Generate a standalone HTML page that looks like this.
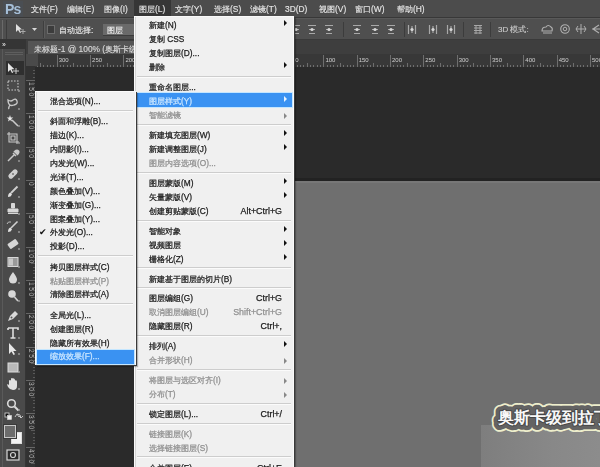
<!DOCTYPE html>
<html><head><meta charset="utf-8">
<style>
*{margin:0;padding:0;box-sizing:border-box}
html,body{width:600px;height:467px;overflow:hidden;background:#2a2a2a;font-family:"Liberation Sans",sans-serif;position:relative}
.abs{position:absolute}
#menubar{left:0;top:0;width:600px;height:17px;background:#4c4c4c}
.mb{position:absolute;top:3px;font-size:8.4px;line-height:12px;color:#e4e4e4;white-space:nowrap;-webkit-text-stroke-width:0.15px}
#opts{left:0;top:17px;width:600px;height:23px;background:#4f4f4f;border-top:1px solid #383838;border-bottom:1px solid #3a3a3a}
#tabbar{left:26px;top:40px;width:574px;height:14px;background:#3e3e3e}
#tab{left:28px;top:41px;width:110px;height:13px;background:#555555}
#tool{left:0;top:39px;width:26px;height:428px;background:#4a4a4a;border-right:1px solid #353535}
#vruler{left:26px;top:54px;width:9px;height:413px;background:#323232}
#hruler{left:26px;top:54px;width:574px;height:13px;background:#383838}
#canvas2{left:256px;top:181px;width:344px;height:286px;background:#6f6f6f}
.menu{position:absolute;background:#f0f0f0;border:1px solid #fafafa;box-shadow:1px 1px 0 #3a3a3a,2px 2px 1px rgba(0,0,0,0.25),inset 1px 0 0 #d4d4d4}
.it{position:absolute;font-size:8.3px;line-height:12px;color:#1c1c1c;-webkit-text-stroke-width:0.25px;white-space:nowrap}
.dis{color:#909090}
.hlt{color:#c8e5ff}
.sep{position:absolute;height:2px;border-top:1px solid #cdcdcd;border-bottom:1px solid #fbfbfb}
.arr{position:absolute;width:0;height:0;border-left:3px solid #111;border-top:3px solid transparent;border-bottom:3px solid transparent}
.arr.dis{border-left-color:#888}
.arr.hla{border-left-color:#e8f4ff}
.hl{position:absolute;background:#3a92f2;border:1px solid #c4e6ff}
.chk{position:absolute;font-size:9px;line-height:12px;color:#111}
.rl{position:absolute;font-size:6px;line-height:7px;color:#cfcfcf;white-space:nowrap}
.tk{position:absolute;background:#6e6e6e}
.ti{position:absolute}
#wrap{position:absolute;left:0;top:0;width:600px;height:467px;overflow:hidden;filter:blur(0.35px)}
</style></head><body><div id="wrap">
<div id="canvas2" class="abs"></div>
<div class="abs" style="left:35px;top:178px;width:565px;height:3px;background:#222"></div>
<div class="abs" style="left:256px;top:181px;width:344px;height:2px;background:#777"></div>
<div class="abs" style="left:481px;top:425px;width:119px;height:42px;background:linear-gradient(90deg,#7e7e7e,#888 60%,#8c8c8c)"></div>
<svg class="abs" style="left:470px;top:390px" width="130" height="45" viewBox="0 0 130 45"><g font-family="Liberation Sans, sans-serif" font-size="16.3" stroke-linejoin="round">
<text x="28" y="33" fill="#eeeecc" stroke="#eeeecc" stroke-width="13.5">奥斯卡级到拉丁</text>
<text x="28" y="33" fill="#636363" stroke="#636363" stroke-width="10">奥斯卡级到拉丁</text>
<text x="28" y="33" fill="#f8f8f8" stroke="#454545" stroke-width="2" paint-order="stroke" font-weight="bold">奥斯卡级到拉丁</text>
</g></svg>

<div id="menubar" class="abs">
  <div class="abs" style="left:3px;top:1px;width:20px;height:16px;background:#48505a;opacity:.5"></div><span class="mb" style="left:5px;top:1px;font-size:14px;line-height:17px;font-weight:bold;letter-spacing:-0.8px;color:#a6bfd8;-webkit-text-stroke-width:0">Ps</span>
  <div class="abs" style="left:134px;top:0;width:37px;height:17px;background:#363636"></div>
  <span class="mb" style="left:31px">文件(F)</span>
  <span class="mb" style="left:67px">编辑(E)</span>
  <span class="mb" style="left:104px">图像(I)</span>
  <span class="mb" style="left:139px">图层(L)</span>
  <span class="mb" style="left:175px">文字(Y)</span>
  <span class="mb" style="left:214px">选择(S)</span>
  <span class="mb" style="left:250px">滤镜(T)</span>
  <span class="mb" style="left:285px">3D(D)</span>
  <span class="mb" style="left:319px">视图(V)</span>
  <span class="mb" style="left:355px">窗口(W)</span>
  <span class="mb" style="left:397px">帮助(H)</span>
</div>
<div id="opts" class="abs"></div>
<div class="abs" style="left:0;top:18px;width:600px;height:1px;background:#595959"></div>
<div class="abs" style="left:2px;top:20px;width:1px;height:19px;background:#6a6a6a"></div>
<div class="abs" style="left:6px;top:20px;width:1px;height:19px;background:#3c3c3c"></div>
<svg class="abs" style="left:14px;top:23px" width="14" height="12" viewBox="0 0 14 12"><path d="M2 1 L2 9 L4 7 L6 10 L7 9.5 L5.5 6.5 L8 6.5 Z" fill="#e0e0e0"/><path d="M9 6 V11 M6.5 8.5 H11.5" stroke="#a8a8a8" stroke-width="1"/></svg>
<svg class="abs" style="left:32px;top:28px" width="5" height="4"><path d="M0 0 H5 L2.5 3 Z" fill="#d8d8d8"/></svg>
<div class="abs" style="left:43px;top:21px;width:1px;height:17px;background:#3e3e3e"></div>
<div class="abs" style="left:44px;top:21px;width:1px;height:17px;background:#5c5c5c"></div>
<div class="abs" style="left:47px;top:25px;width:8px;height:9px;background:#3c3c3c;border:1px solid #6c6c6c"></div>
<div class="abs mb" style="left:59px;top:24px;color:#e8e8e8">自动选择:</div>
<div class="abs" style="left:103px;top:24px;width:34px;height:12px;background:#6a6a6a;border-bottom:1px solid #3c3c3c"></div>
<div class="abs mb" style="left:107px;top:24px;color:#f0f0f0">图层</div>
<svg class="abs" style="left:291px;top:24px" width="10" height="11"><path d="M1 1.5 H9 M2 5.5 H8 M2 9.5 H8" stroke="#a8a8a8" stroke-width="1.2"/><circle cx="5" cy="5.5" r="1.6" fill="#d8d8d8"/></svg>
<svg class="abs" style="left:307px;top:24px" width="10" height="11"><path d="M1 1.5 H9 M2 5.5 H8 M2 9.5 H8" stroke="#a8a8a8" stroke-width="1.2"/><circle cx="5" cy="5.5" r="1.6" fill="#d8d8d8"/></svg>
<svg class="abs" style="left:324px;top:24px" width="10" height="11"><path d="M1 1.5 H9 M2 5.5 H8 M2 9.5 H8" stroke="#a8a8a8" stroke-width="1.2"/><circle cx="5" cy="5.5" r="1.6" fill="#d8d8d8"/></svg>
<div class="abs" style="left:343px;top:22px;width:1px;height:15px;background:#3c3c3c"></div>
<svg class="abs" style="left:352px;top:24px" width="10" height="11"><path d="M1 1.5 H9 M2 5.5 H8 M2 9.5 H8" stroke="#a8a8a8" stroke-width="1.2"/><circle cx="5" cy="5.5" r="1.6" fill="#d8d8d8"/></svg>
<svg class="abs" style="left:370px;top:24px" width="10" height="11"><path d="M1 1.5 H9 M2 5.5 H8 M2 9.5 H8" stroke="#a8a8a8" stroke-width="1.2"/><circle cx="5" cy="5.5" r="1.6" fill="#d8d8d8"/></svg>
<svg class="abs" style="left:386px;top:24px" width="10" height="11"><path d="M1 1.5 H9 M2 5.5 H8 M2 9.5 H8" stroke="#a8a8a8" stroke-width="1.2"/><circle cx="5" cy="5.5" r="1.6" fill="#d8d8d8"/></svg>
<div class="abs" style="left:404px;top:22px;width:1px;height:15px;background:#3c3c3c"></div>
<svg class="abs" style="left:407px;top:24px" width="10" height="11"><path d="M1.5 1 V10 M5 2 V9 M8.5 1 V10" stroke="#a8a8a8" stroke-width="1.2"/><circle cx="5" cy="5.5" r="1.6" fill="#d8d8d8"/></svg>
<svg class="abs" style="left:428px;top:24px" width="10" height="11"><path d="M1.5 1 V10 M5 2 V9 M8.5 1 V10" stroke="#a8a8a8" stroke-width="1.2"/><circle cx="5" cy="5.5" r="1.6" fill="#d8d8d8"/></svg>
<svg class="abs" style="left:446px;top:24px" width="10" height="11"><path d="M1.5 1 V10 M5 2 V9 M8.5 1 V10" stroke="#a8a8a8" stroke-width="1.2"/><circle cx="5" cy="5.5" r="1.6" fill="#d8d8d8"/></svg>
<div class="abs" style="left:463px;top:22px;width:1px;height:15px;background:#3c3c3c"></div>
<svg class="abs" style="left:473px;top:24px" width="10" height="11"><path d="M1 1.5 H9 M1 4 H9 M1 6.5 H9 M1 9 H9 M3 1 V10 M7 1 V10" stroke="#a8a8a8" stroke-width="1"/></svg>
<div class="abs" style="left:490px;top:22px;width:1px;height:15px;background:#3c3c3c"></div>
<div class="abs mb" style="left:498px;top:24px;color:#c8c8c8;font-size:8px">3D 模式:</div>
<svg class="abs" style="left:540px;top:23px" width="14" height="12"><path d="M2 8 Q2 4 6 4 Q8 1 11 4 Q13 5 12 8 Z M3 10 H12" stroke="#b0b0b0" stroke-width="1.1" fill="none"/></svg>
<svg class="abs" style="left:559px;top:23px" width="12" height="12"><circle cx="6" cy="6" r="4.3" stroke="#b0b0b0" stroke-width="1.1" fill="none"/><circle cx="6" cy="6" r="1.8" stroke="#b0b0b0" stroke-width="1" fill="none"/></svg>
<svg class="abs" style="left:575px;top:23px" width="12" height="12"><path d="M6 1 V11 M1 6 H11 M3 3 L1 6 L3 9 M9 3 L11 6 L9 9" stroke="#b0b0b0" stroke-width="1" fill="none"/></svg>
<svg class="abs" style="left:591px;top:23px" width="12" height="12"><path d="M2 6 L8 2 M2 6 L8 10 M1 6 H10" stroke="#b0b0b0" stroke-width="1.1" fill="none"/></svg>
<div id="tabbar" class="abs"></div>
<div id="tab" class="abs"></div>
<div class="abs mb" style="left:34px;top:43px;font-size:8.4px;line-height:12px;color:#d8d8d8">未标题-1 @ 100% (奥斯卡级到拉</div>
<div id="hruler" class="abs"></div>
<div class="tk" style="left:36.7px;top:65px;width:1px;height:2px"></div>
<div class="tk" style="left:40.1px;top:63px;width:1px;height:4px"></div>
<div class="tk" style="left:43.4px;top:65px;width:1px;height:2px"></div>
<div class="tk" style="left:46.7px;top:65px;width:1px;height:2px"></div>
<div class="tk" style="left:50.1px;top:65px;width:1px;height:2px"></div>
<div class="tk" style="left:53.4px;top:65px;width:1px;height:2px"></div>
<div class="tk" style="left:56.7px;top:55px;width:1px;height:12px"></div>
<div class="rl" style="left:58.7px;top:57px">300</div>
<div class="tk" style="left:60.1px;top:65px;width:1px;height:2px"></div>
<div class="tk" style="left:63.4px;top:65px;width:1px;height:2px"></div>
<div class="tk" style="left:66.7px;top:65px;width:1px;height:2px"></div>
<div class="tk" style="left:70.1px;top:65px;width:1px;height:2px"></div>
<div class="tk" style="left:73.4px;top:63px;width:1px;height:4px"></div>
<div class="tk" style="left:76.7px;top:65px;width:1px;height:2px"></div>
<div class="tk" style="left:80.1px;top:65px;width:1px;height:2px"></div>
<div class="tk" style="left:83.4px;top:65px;width:1px;height:2px"></div>
<div class="tk" style="left:86.7px;top:65px;width:1px;height:2px"></div>
<div class="tk" style="left:90.1px;top:55px;width:1px;height:12px"></div>
<div class="rl" style="left:92.1px;top:57px">250</div>
<div class="tk" style="left:93.4px;top:65px;width:1px;height:2px"></div>
<div class="tk" style="left:96.7px;top:65px;width:1px;height:2px"></div>
<div class="tk" style="left:100.0px;top:65px;width:1px;height:2px"></div>
<div class="tk" style="left:103.4px;top:65px;width:1px;height:2px"></div>
<div class="tk" style="left:106.7px;top:63px;width:1px;height:4px"></div>
<div class="tk" style="left:110.0px;top:65px;width:1px;height:2px"></div>
<div class="tk" style="left:113.4px;top:65px;width:1px;height:2px"></div>
<div class="tk" style="left:116.7px;top:65px;width:1px;height:2px"></div>
<div class="tk" style="left:120.0px;top:65px;width:1px;height:2px"></div>
<div class="tk" style="left:123.4px;top:55px;width:1px;height:12px"></div>
<div class="rl" style="left:125.4px;top:57px">200</div>
<div class="tk" style="left:126.7px;top:65px;width:1px;height:2px"></div>
<div class="tk" style="left:130.0px;top:65px;width:1px;height:2px"></div>
<div class="tk" style="left:133.4px;top:65px;width:1px;height:2px"></div>
<div class="tk" style="left:136.7px;top:65px;width:1px;height:2px"></div>
<div class="tk" style="left:140.0px;top:63px;width:1px;height:4px"></div>
<div class="tk" style="left:143.4px;top:65px;width:1px;height:2px"></div>
<div class="tk" style="left:146.7px;top:65px;width:1px;height:2px"></div>
<div class="tk" style="left:150.0px;top:65px;width:1px;height:2px"></div>
<div class="tk" style="left:153.4px;top:65px;width:1px;height:2px"></div>
<div class="tk" style="left:156.7px;top:55px;width:1px;height:12px"></div>
<div class="rl" style="left:158.7px;top:57px">150</div>
<div class="tk" style="left:160.0px;top:65px;width:1px;height:2px"></div>
<div class="tk" style="left:163.4px;top:65px;width:1px;height:2px"></div>
<div class="tk" style="left:166.7px;top:65px;width:1px;height:2px"></div>
<div class="tk" style="left:170.0px;top:65px;width:1px;height:2px"></div>
<div class="tk" style="left:173.4px;top:63px;width:1px;height:4px"></div>
<div class="tk" style="left:176.7px;top:65px;width:1px;height:2px"></div>
<div class="tk" style="left:180.0px;top:65px;width:1px;height:2px"></div>
<div class="tk" style="left:183.4px;top:65px;width:1px;height:2px"></div>
<div class="tk" style="left:186.7px;top:65px;width:1px;height:2px"></div>
<div class="tk" style="left:190.0px;top:55px;width:1px;height:12px"></div>
<div class="rl" style="left:192.0px;top:57px">100</div>
<div class="tk" style="left:193.4px;top:65px;width:1px;height:2px"></div>
<div class="tk" style="left:196.7px;top:65px;width:1px;height:2px"></div>
<div class="tk" style="left:200.0px;top:65px;width:1px;height:2px"></div>
<div class="tk" style="left:203.4px;top:65px;width:1px;height:2px"></div>
<div class="tk" style="left:206.7px;top:63px;width:1px;height:4px"></div>
<div class="tk" style="left:210.0px;top:65px;width:1px;height:2px"></div>
<div class="tk" style="left:213.4px;top:65px;width:1px;height:2px"></div>
<div class="tk" style="left:216.7px;top:65px;width:1px;height:2px"></div>
<div class="tk" style="left:220.0px;top:65px;width:1px;height:2px"></div>
<div class="tk" style="left:223.4px;top:55px;width:1px;height:12px"></div>
<div class="rl" style="left:225.4px;top:57px">50</div>
<div class="tk" style="left:226.7px;top:65px;width:1px;height:2px"></div>
<div class="tk" style="left:230.0px;top:65px;width:1px;height:2px"></div>
<div class="tk" style="left:233.4px;top:65px;width:1px;height:2px"></div>
<div class="tk" style="left:236.7px;top:65px;width:1px;height:2px"></div>
<div class="tk" style="left:240.0px;top:63px;width:1px;height:4px"></div>
<div class="tk" style="left:243.4px;top:65px;width:1px;height:2px"></div>
<div class="tk" style="left:246.7px;top:65px;width:1px;height:2px"></div>
<div class="tk" style="left:250.0px;top:65px;width:1px;height:2px"></div>
<div class="tk" style="left:253.4px;top:65px;width:1px;height:2px"></div>
<div class="tk" style="left:256.7px;top:55px;width:1px;height:12px"></div>
<div class="rl" style="left:258.7px;top:57px">0</div>
<div class="tk" style="left:260.0px;top:65px;width:1px;height:2px"></div>
<div class="tk" style="left:263.4px;top:65px;width:1px;height:2px"></div>
<div class="tk" style="left:266.7px;top:65px;width:1px;height:2px"></div>
<div class="tk" style="left:270.0px;top:65px;width:1px;height:2px"></div>
<div class="tk" style="left:273.4px;top:63px;width:1px;height:4px"></div>
<div class="tk" style="left:276.7px;top:65px;width:1px;height:2px"></div>
<div class="tk" style="left:280.0px;top:65px;width:1px;height:2px"></div>
<div class="tk" style="left:283.4px;top:65px;width:1px;height:2px"></div>
<div class="tk" style="left:286.7px;top:65px;width:1px;height:2px"></div>
<div class="tk" style="left:290.0px;top:55px;width:1px;height:12px"></div>
<div class="rl" style="left:292.0px;top:57px">50</div>
<div class="tk" style="left:293.4px;top:65px;width:1px;height:2px"></div>
<div class="tk" style="left:296.7px;top:65px;width:1px;height:2px"></div>
<div class="tk" style="left:300.0px;top:65px;width:1px;height:2px"></div>
<div class="tk" style="left:303.4px;top:65px;width:1px;height:2px"></div>
<div class="tk" style="left:306.7px;top:63px;width:1px;height:4px"></div>
<div class="tk" style="left:310.0px;top:65px;width:1px;height:2px"></div>
<div class="tk" style="left:313.4px;top:65px;width:1px;height:2px"></div>
<div class="tk" style="left:316.7px;top:65px;width:1px;height:2px"></div>
<div class="tk" style="left:320.0px;top:65px;width:1px;height:2px"></div>
<div class="tk" style="left:323.4px;top:55px;width:1px;height:12px"></div>
<div class="rl" style="left:325.4px;top:57px">100</div>
<div class="tk" style="left:326.7px;top:65px;width:1px;height:2px"></div>
<div class="tk" style="left:330.0px;top:65px;width:1px;height:2px"></div>
<div class="tk" style="left:333.4px;top:65px;width:1px;height:2px"></div>
<div class="tk" style="left:336.7px;top:65px;width:1px;height:2px"></div>
<div class="tk" style="left:340.0px;top:63px;width:1px;height:4px"></div>
<div class="tk" style="left:343.4px;top:65px;width:1px;height:2px"></div>
<div class="tk" style="left:346.7px;top:65px;width:1px;height:2px"></div>
<div class="tk" style="left:350.0px;top:65px;width:1px;height:2px"></div>
<div class="tk" style="left:353.4px;top:65px;width:1px;height:2px"></div>
<div class="tk" style="left:356.7px;top:55px;width:1px;height:12px"></div>
<div class="rl" style="left:358.7px;top:57px">150</div>
<div class="tk" style="left:360.0px;top:65px;width:1px;height:2px"></div>
<div class="tk" style="left:363.4px;top:65px;width:1px;height:2px"></div>
<div class="tk" style="left:366.7px;top:65px;width:1px;height:2px"></div>
<div class="tk" style="left:370.0px;top:65px;width:1px;height:2px"></div>
<div class="tk" style="left:373.4px;top:63px;width:1px;height:4px"></div>
<div class="tk" style="left:376.7px;top:65px;width:1px;height:2px"></div>
<div class="tk" style="left:380.0px;top:65px;width:1px;height:2px"></div>
<div class="tk" style="left:383.4px;top:65px;width:1px;height:2px"></div>
<div class="tk" style="left:386.7px;top:65px;width:1px;height:2px"></div>
<div class="tk" style="left:390.0px;top:55px;width:1px;height:12px"></div>
<div class="rl" style="left:392.0px;top:57px">200</div>
<div class="tk" style="left:393.4px;top:65px;width:1px;height:2px"></div>
<div class="tk" style="left:396.7px;top:65px;width:1px;height:2px"></div>
<div class="tk" style="left:400.0px;top:65px;width:1px;height:2px"></div>
<div class="tk" style="left:403.4px;top:65px;width:1px;height:2px"></div>
<div class="tk" style="left:406.7px;top:63px;width:1px;height:4px"></div>
<div class="tk" style="left:410.0px;top:65px;width:1px;height:2px"></div>
<div class="tk" style="left:413.4px;top:65px;width:1px;height:2px"></div>
<div class="tk" style="left:416.7px;top:65px;width:1px;height:2px"></div>
<div class="tk" style="left:420.0px;top:65px;width:1px;height:2px"></div>
<div class="tk" style="left:423.3px;top:55px;width:1px;height:12px"></div>
<div class="rl" style="left:425.3px;top:57px">250</div>
<div class="tk" style="left:426.7px;top:65px;width:1px;height:2px"></div>
<div class="tk" style="left:430.0px;top:65px;width:1px;height:2px"></div>
<div class="tk" style="left:433.3px;top:65px;width:1px;height:2px"></div>
<div class="tk" style="left:436.7px;top:65px;width:1px;height:2px"></div>
<div class="tk" style="left:440.0px;top:63px;width:1px;height:4px"></div>
<div class="tk" style="left:443.3px;top:65px;width:1px;height:2px"></div>
<div class="tk" style="left:446.7px;top:65px;width:1px;height:2px"></div>
<div class="tk" style="left:450.0px;top:65px;width:1px;height:2px"></div>
<div class="tk" style="left:453.3px;top:65px;width:1px;height:2px"></div>
<div class="tk" style="left:456.7px;top:55px;width:1px;height:12px"></div>
<div class="rl" style="left:458.7px;top:57px">300</div>
<div class="tk" style="left:460.0px;top:65px;width:1px;height:2px"></div>
<div class="tk" style="left:463.3px;top:65px;width:1px;height:2px"></div>
<div class="tk" style="left:466.7px;top:65px;width:1px;height:2px"></div>
<div class="tk" style="left:470.0px;top:65px;width:1px;height:2px"></div>
<div class="tk" style="left:473.3px;top:63px;width:1px;height:4px"></div>
<div class="tk" style="left:476.7px;top:65px;width:1px;height:2px"></div>
<div class="tk" style="left:480.0px;top:65px;width:1px;height:2px"></div>
<div class="tk" style="left:483.3px;top:65px;width:1px;height:2px"></div>
<div class="tk" style="left:486.7px;top:65px;width:1px;height:2px"></div>
<div class="tk" style="left:490.0px;top:55px;width:1px;height:12px"></div>
<div class="rl" style="left:492.0px;top:57px">350</div>
<div class="tk" style="left:493.3px;top:65px;width:1px;height:2px"></div>
<div class="tk" style="left:496.7px;top:65px;width:1px;height:2px"></div>
<div class="tk" style="left:500.0px;top:65px;width:1px;height:2px"></div>
<div class="tk" style="left:503.3px;top:65px;width:1px;height:2px"></div>
<div class="tk" style="left:506.7px;top:63px;width:1px;height:4px"></div>
<div class="tk" style="left:510.0px;top:65px;width:1px;height:2px"></div>
<div class="tk" style="left:513.3px;top:65px;width:1px;height:2px"></div>
<div class="tk" style="left:516.7px;top:65px;width:1px;height:2px"></div>
<div class="tk" style="left:520.0px;top:65px;width:1px;height:2px"></div>
<div class="tk" style="left:523.3px;top:55px;width:1px;height:12px"></div>
<div class="rl" style="left:525.3px;top:57px">400</div>
<div class="tk" style="left:526.7px;top:65px;width:1px;height:2px"></div>
<div class="tk" style="left:530.0px;top:65px;width:1px;height:2px"></div>
<div class="tk" style="left:533.3px;top:65px;width:1px;height:2px"></div>
<div class="tk" style="left:536.7px;top:65px;width:1px;height:2px"></div>
<div class="tk" style="left:540.0px;top:63px;width:1px;height:4px"></div>
<div class="tk" style="left:543.3px;top:65px;width:1px;height:2px"></div>
<div class="tk" style="left:546.7px;top:65px;width:1px;height:2px"></div>
<div class="tk" style="left:550.0px;top:65px;width:1px;height:2px"></div>
<div class="tk" style="left:553.3px;top:65px;width:1px;height:2px"></div>
<div class="tk" style="left:556.7px;top:55px;width:1px;height:12px"></div>
<div class="rl" style="left:558.7px;top:57px">450</div>
<div class="tk" style="left:560.0px;top:65px;width:1px;height:2px"></div>
<div class="tk" style="left:563.3px;top:65px;width:1px;height:2px"></div>
<div class="tk" style="left:566.7px;top:65px;width:1px;height:2px"></div>
<div class="tk" style="left:570.0px;top:65px;width:1px;height:2px"></div>
<div class="tk" style="left:573.3px;top:63px;width:1px;height:4px"></div>
<div class="tk" style="left:576.7px;top:65px;width:1px;height:2px"></div>
<div class="tk" style="left:580.0px;top:65px;width:1px;height:2px"></div>
<div class="tk" style="left:583.3px;top:65px;width:1px;height:2px"></div>
<div class="tk" style="left:586.7px;top:65px;width:1px;height:2px"></div>
<div class="tk" style="left:590.0px;top:55px;width:1px;height:12px"></div>
<div class="rl" style="left:592.0px;top:57px">500</div>
<div class="tk" style="left:593.3px;top:65px;width:1px;height:2px"></div>
<div class="tk" style="left:596.7px;top:65px;width:1px;height:2px"></div>
<div class="tk" style="left:600.0px;top:65px;width:1px;height:2px"></div>
<div id="vruler" class="abs"></div>
<div class="tk" style="left:33px;top:70.0px;width:2px;height:1px;background:#5a5a5a"></div>
<div class="tk" style="left:33px;top:73.3px;width:2px;height:1px;background:#5a5a5a"></div>
<div class="tk" style="left:33px;top:76.7px;width:2px;height:1px;background:#5a5a5a"></div>
<div class="tk" style="left:26px;top:80.0px;width:9px;height:1px;background:#666"></div>
<div class="rl" style="left:28px;top:82.0px;writing-mode:vertical-rl;font-size:6.5px;line-height:7px;letter-spacing:1.6px;color:#bdbdbd">150</div>
<div class="tk" style="left:33px;top:83.3px;width:2px;height:1px;background:#5a5a5a"></div>
<div class="tk" style="left:33px;top:86.7px;width:2px;height:1px;background:#5a5a5a"></div>
<div class="tk" style="left:33px;top:90.0px;width:2px;height:1px;background:#5a5a5a"></div>
<div class="tk" style="left:33px;top:93.3px;width:2px;height:1px;background:#5a5a5a"></div>
<div class="tk" style="left:31px;top:96.7px;width:4px;height:1px;background:#5a5a5a"></div>
<div class="tk" style="left:33px;top:100.0px;width:2px;height:1px;background:#5a5a5a"></div>
<div class="tk" style="left:33px;top:103.3px;width:2px;height:1px;background:#5a5a5a"></div>
<div class="tk" style="left:33px;top:106.7px;width:2px;height:1px;background:#5a5a5a"></div>
<div class="tk" style="left:33px;top:110.0px;width:2px;height:1px;background:#5a5a5a"></div>
<div class="tk" style="left:26px;top:113.3px;width:9px;height:1px;background:#666"></div>
<div class="rl" style="left:28px;top:115.3px;writing-mode:vertical-rl;font-size:6.5px;line-height:7px;letter-spacing:1.6px;color:#bdbdbd">100</div>
<div class="tk" style="left:33px;top:116.7px;width:2px;height:1px;background:#5a5a5a"></div>
<div class="tk" style="left:33px;top:120.0px;width:2px;height:1px;background:#5a5a5a"></div>
<div class="tk" style="left:33px;top:123.3px;width:2px;height:1px;background:#5a5a5a"></div>
<div class="tk" style="left:33px;top:126.7px;width:2px;height:1px;background:#5a5a5a"></div>
<div class="tk" style="left:31px;top:130.0px;width:4px;height:1px;background:#5a5a5a"></div>
<div class="tk" style="left:33px;top:133.3px;width:2px;height:1px;background:#5a5a5a"></div>
<div class="tk" style="left:33px;top:136.7px;width:2px;height:1px;background:#5a5a5a"></div>
<div class="tk" style="left:33px;top:140.0px;width:2px;height:1px;background:#5a5a5a"></div>
<div class="tk" style="left:33px;top:143.3px;width:2px;height:1px;background:#5a5a5a"></div>
<div class="tk" style="left:26px;top:146.7px;width:9px;height:1px;background:#666"></div>
<div class="rl" style="left:28px;top:148.7px;writing-mode:vertical-rl;font-size:6.5px;line-height:7px;letter-spacing:1.6px;color:#bdbdbd">50</div>
<div class="tk" style="left:33px;top:150.0px;width:2px;height:1px;background:#5a5a5a"></div>
<div class="tk" style="left:33px;top:153.3px;width:2px;height:1px;background:#5a5a5a"></div>
<div class="tk" style="left:33px;top:156.7px;width:2px;height:1px;background:#5a5a5a"></div>
<div class="tk" style="left:33px;top:160.0px;width:2px;height:1px;background:#5a5a5a"></div>
<div class="tk" style="left:31px;top:163.3px;width:4px;height:1px;background:#5a5a5a"></div>
<div class="tk" style="left:33px;top:166.7px;width:2px;height:1px;background:#5a5a5a"></div>
<div class="tk" style="left:33px;top:170.0px;width:2px;height:1px;background:#5a5a5a"></div>
<div class="tk" style="left:33px;top:173.3px;width:2px;height:1px;background:#5a5a5a"></div>
<div class="tk" style="left:33px;top:176.7px;width:2px;height:1px;background:#5a5a5a"></div>
<div class="tk" style="left:26px;top:180.0px;width:9px;height:1px;background:#666"></div>
<div class="rl" style="left:28px;top:182.0px;writing-mode:vertical-rl;font-size:6.5px;line-height:7px;letter-spacing:1.6px;color:#bdbdbd">0</div>
<div class="tk" style="left:33px;top:183.3px;width:2px;height:1px;background:#5a5a5a"></div>
<div class="tk" style="left:33px;top:186.7px;width:2px;height:1px;background:#5a5a5a"></div>
<div class="tk" style="left:33px;top:190.0px;width:2px;height:1px;background:#5a5a5a"></div>
<div class="tk" style="left:33px;top:193.3px;width:2px;height:1px;background:#5a5a5a"></div>
<div class="tk" style="left:31px;top:196.7px;width:4px;height:1px;background:#5a5a5a"></div>
<div class="tk" style="left:33px;top:200.0px;width:2px;height:1px;background:#5a5a5a"></div>
<div class="tk" style="left:33px;top:203.3px;width:2px;height:1px;background:#5a5a5a"></div>
<div class="tk" style="left:33px;top:206.7px;width:2px;height:1px;background:#5a5a5a"></div>
<div class="tk" style="left:33px;top:210.0px;width:2px;height:1px;background:#5a5a5a"></div>
<div class="tk" style="left:26px;top:213.3px;width:9px;height:1px;background:#666"></div>
<div class="rl" style="left:28px;top:215.3px;writing-mode:vertical-rl;font-size:6.5px;line-height:7px;letter-spacing:1.6px;color:#bdbdbd">50</div>
<div class="tk" style="left:33px;top:216.7px;width:2px;height:1px;background:#5a5a5a"></div>
<div class="tk" style="left:33px;top:220.0px;width:2px;height:1px;background:#5a5a5a"></div>
<div class="tk" style="left:33px;top:223.3px;width:2px;height:1px;background:#5a5a5a"></div>
<div class="tk" style="left:33px;top:226.7px;width:2px;height:1px;background:#5a5a5a"></div>
<div class="tk" style="left:31px;top:230.0px;width:4px;height:1px;background:#5a5a5a"></div>
<div class="tk" style="left:33px;top:233.3px;width:2px;height:1px;background:#5a5a5a"></div>
<div class="tk" style="left:33px;top:236.7px;width:2px;height:1px;background:#5a5a5a"></div>
<div class="tk" style="left:33px;top:240.0px;width:2px;height:1px;background:#5a5a5a"></div>
<div class="tk" style="left:33px;top:243.3px;width:2px;height:1px;background:#5a5a5a"></div>
<div class="tk" style="left:26px;top:246.7px;width:9px;height:1px;background:#666"></div>
<div class="rl" style="left:28px;top:248.7px;writing-mode:vertical-rl;font-size:6.5px;line-height:7px;letter-spacing:1.6px;color:#bdbdbd">100</div>
<div class="tk" style="left:33px;top:250.0px;width:2px;height:1px;background:#5a5a5a"></div>
<div class="tk" style="left:33px;top:253.3px;width:2px;height:1px;background:#5a5a5a"></div>
<div class="tk" style="left:33px;top:256.7px;width:2px;height:1px;background:#5a5a5a"></div>
<div class="tk" style="left:33px;top:260.0px;width:2px;height:1px;background:#5a5a5a"></div>
<div class="tk" style="left:31px;top:263.3px;width:4px;height:1px;background:#5a5a5a"></div>
<div class="tk" style="left:33px;top:266.7px;width:2px;height:1px;background:#5a5a5a"></div>
<div class="tk" style="left:33px;top:270.0px;width:2px;height:1px;background:#5a5a5a"></div>
<div class="tk" style="left:33px;top:273.3px;width:2px;height:1px;background:#5a5a5a"></div>
<div class="tk" style="left:33px;top:276.7px;width:2px;height:1px;background:#5a5a5a"></div>
<div class="tk" style="left:26px;top:280.0px;width:9px;height:1px;background:#666"></div>
<div class="rl" style="left:28px;top:282.0px;writing-mode:vertical-rl;font-size:6.5px;line-height:7px;letter-spacing:1.6px;color:#bdbdbd">150</div>
<div class="tk" style="left:33px;top:283.3px;width:2px;height:1px;background:#5a5a5a"></div>
<div class="tk" style="left:33px;top:286.7px;width:2px;height:1px;background:#5a5a5a"></div>
<div class="tk" style="left:33px;top:290.0px;width:2px;height:1px;background:#5a5a5a"></div>
<div class="tk" style="left:33px;top:293.3px;width:2px;height:1px;background:#5a5a5a"></div>
<div class="tk" style="left:31px;top:296.7px;width:4px;height:1px;background:#5a5a5a"></div>
<div class="tk" style="left:33px;top:300.0px;width:2px;height:1px;background:#5a5a5a"></div>
<div class="tk" style="left:33px;top:303.3px;width:2px;height:1px;background:#5a5a5a"></div>
<div class="tk" style="left:33px;top:306.7px;width:2px;height:1px;background:#5a5a5a"></div>
<div class="tk" style="left:33px;top:310.0px;width:2px;height:1px;background:#5a5a5a"></div>
<div class="tk" style="left:26px;top:313.3px;width:9px;height:1px;background:#666"></div>
<div class="rl" style="left:28px;top:315.3px;writing-mode:vertical-rl;font-size:6.5px;line-height:7px;letter-spacing:1.6px;color:#bdbdbd">200</div>
<div class="tk" style="left:33px;top:316.7px;width:2px;height:1px;background:#5a5a5a"></div>
<div class="tk" style="left:33px;top:320.0px;width:2px;height:1px;background:#5a5a5a"></div>
<div class="tk" style="left:33px;top:323.3px;width:2px;height:1px;background:#5a5a5a"></div>
<div class="tk" style="left:33px;top:326.7px;width:2px;height:1px;background:#5a5a5a"></div>
<div class="tk" style="left:31px;top:330.0px;width:4px;height:1px;background:#5a5a5a"></div>
<div class="tk" style="left:33px;top:333.3px;width:2px;height:1px;background:#5a5a5a"></div>
<div class="tk" style="left:33px;top:336.7px;width:2px;height:1px;background:#5a5a5a"></div>
<div class="tk" style="left:33px;top:340.0px;width:2px;height:1px;background:#5a5a5a"></div>
<div class="tk" style="left:33px;top:343.3px;width:2px;height:1px;background:#5a5a5a"></div>
<div class="tk" style="left:26px;top:346.6px;width:9px;height:1px;background:#666"></div>
<div class="rl" style="left:28px;top:348.6px;writing-mode:vertical-rl;font-size:6.5px;line-height:7px;letter-spacing:1.6px;color:#bdbdbd">250</div>
<div class="tk" style="left:33px;top:350.0px;width:2px;height:1px;background:#5a5a5a"></div>
<div class="tk" style="left:33px;top:353.3px;width:2px;height:1px;background:#5a5a5a"></div>
<div class="tk" style="left:33px;top:356.6px;width:2px;height:1px;background:#5a5a5a"></div>
<div class="tk" style="left:33px;top:360.0px;width:2px;height:1px;background:#5a5a5a"></div>
<div class="tk" style="left:31px;top:363.3px;width:4px;height:1px;background:#5a5a5a"></div>
<div class="tk" style="left:33px;top:366.6px;width:2px;height:1px;background:#5a5a5a"></div>
<div class="tk" style="left:33px;top:370.0px;width:2px;height:1px;background:#5a5a5a"></div>
<div class="tk" style="left:33px;top:373.3px;width:2px;height:1px;background:#5a5a5a"></div>
<div class="tk" style="left:33px;top:376.6px;width:2px;height:1px;background:#5a5a5a"></div>
<div class="tk" style="left:26px;top:380.0px;width:9px;height:1px;background:#666"></div>
<div class="rl" style="left:28px;top:382.0px;writing-mode:vertical-rl;font-size:6.5px;line-height:7px;letter-spacing:1.6px;color:#bdbdbd">300</div>
<div class="tk" style="left:33px;top:383.3px;width:2px;height:1px;background:#5a5a5a"></div>
<div class="tk" style="left:33px;top:386.6px;width:2px;height:1px;background:#5a5a5a"></div>
<div class="tk" style="left:33px;top:390.0px;width:2px;height:1px;background:#5a5a5a"></div>
<div class="tk" style="left:33px;top:393.3px;width:2px;height:1px;background:#5a5a5a"></div>
<div class="tk" style="left:31px;top:396.6px;width:4px;height:1px;background:#5a5a5a"></div>
<div class="tk" style="left:33px;top:400.0px;width:2px;height:1px;background:#5a5a5a"></div>
<div class="tk" style="left:33px;top:403.3px;width:2px;height:1px;background:#5a5a5a"></div>
<div class="tk" style="left:33px;top:406.6px;width:2px;height:1px;background:#5a5a5a"></div>
<div class="tk" style="left:33px;top:410.0px;width:2px;height:1px;background:#5a5a5a"></div>
<div class="tk" style="left:26px;top:413.3px;width:9px;height:1px;background:#666"></div>
<div class="rl" style="left:28px;top:415.3px;writing-mode:vertical-rl;font-size:6.5px;line-height:7px;letter-spacing:1.6px;color:#bdbdbd">350</div>
<div class="tk" style="left:33px;top:416.6px;width:2px;height:1px;background:#5a5a5a"></div>
<div class="tk" style="left:33px;top:420.0px;width:2px;height:1px;background:#5a5a5a"></div>
<div class="tk" style="left:33px;top:423.3px;width:2px;height:1px;background:#5a5a5a"></div>
<div class="tk" style="left:33px;top:426.6px;width:2px;height:1px;background:#5a5a5a"></div>
<div class="tk" style="left:31px;top:430.0px;width:4px;height:1px;background:#5a5a5a"></div>
<div class="tk" style="left:33px;top:433.3px;width:2px;height:1px;background:#5a5a5a"></div>
<div class="tk" style="left:33px;top:436.6px;width:2px;height:1px;background:#5a5a5a"></div>
<div class="tk" style="left:33px;top:440.0px;width:2px;height:1px;background:#5a5a5a"></div>
<div class="tk" style="left:33px;top:443.3px;width:2px;height:1px;background:#5a5a5a"></div>
<div class="tk" style="left:26px;top:446.6px;width:9px;height:1px;background:#666"></div>
<div class="rl" style="left:28px;top:448.6px;writing-mode:vertical-rl;font-size:6.5px;line-height:7px;letter-spacing:1.6px;color:#bdbdbd">400</div>
<div class="tk" style="left:33px;top:450.0px;width:2px;height:1px;background:#5a5a5a"></div>
<div class="tk" style="left:33px;top:453.3px;width:2px;height:1px;background:#5a5a5a"></div>
<div class="tk" style="left:33px;top:456.6px;width:2px;height:1px;background:#5a5a5a"></div>
<div class="tk" style="left:33px;top:460.0px;width:2px;height:1px;background:#5a5a5a"></div>
<div class="tk" style="left:31px;top:463.3px;width:4px;height:1px;background:#5a5a5a"></div>
<div class="tk" style="left:33px;top:466.6px;width:2px;height:1px;background:#5a5a5a"></div>
<div class="abs" style="left:26px;top:54px;width:12px;height:12px;background:#4a4a4a"></div>
<div id="tool" class="abs"></div>
<div class="abs" style="left:0;top:39px;width:26px;height:10px;background:#353535"></div>
<div class="abs" style="left:2px;top:41px;font-size:7px;line-height:7px;color:#cfcfcf;font-weight:bold">»</div>
<div class="abs" style="left:2px;top:49px;width:1px;height:418px;background:#5a5a5a"></div>
<div class="abs" style="left:5px;top:52px;width:18px;height:1px;background:#5e5e5e"></div>
<div class="abs" style="left:5px;top:54px;width:18px;height:1px;background:#5e5e5e"></div>
<div class="abs" style="left:6px;top:61px;width:18px;height:14px;background:#2f2f2f"></div>
<svg class="abs" style="left:5px;top:60px" width="16" height="16" viewBox="0 0 16 16"><path d="M3 3 L3 12 L5.3 9.8 L7 13 L8.2 12.4 L6.6 9.3 L9.5 9.3 Z" fill="#e6e6e6"/><path d="M11 8 V14 M8 11 H14" stroke="#c9c9c9" stroke-width="1"/></svg>
<svg class="abs" style="left:5px;top:78px" width="16" height="16" viewBox="0 0 16 16"><rect x="3" y="3" width="10" height="9" fill="none" stroke="#c9c9c9" stroke-width="1.1" stroke-dasharray="1.6 1.4"/><circle cx="14" cy="13" r="0.9" fill="#a0a0a0"/></svg>
<svg class="abs" style="left:5px;top:96px" width="16" height="16" viewBox="0 0 16 16"><path d="M3 4 Q6 6 8 4 Q11 2 12 5 Q13 8 9 9 Q6 10 5 9 Q3 8 3 4 Z M5 9 Q3 12 4 13" fill="none" stroke="#c9c9c9" stroke-width="1.3"/><circle cx="14" cy="13" r="0.9" fill="#a0a0a0"/></svg>
<svg class="abs" style="left:5px;top:113px" width="16" height="16" viewBox="0 0 16 16"><path d="M7 7 L13 13" stroke="#c9c9c9" stroke-width="1.6"/><path d="M5 2 L5.8 4.5 L8.3 4.5 L6.3 6 L7 8.5 L5 7 L3 8.5 L3.7 6 L1.7 4.5 L4.2 4.5 Z" fill="#e8e8e8"/><circle cx="14" cy="13" r="0.9" fill="#a0a0a0"/></svg>
<svg class="abs" style="left:5px;top:130px" width="16" height="16" viewBox="0 0 16 16"><path d="M4 2 V12 H14 M2 4 H12 V14 M6 6 H10 V10 H6 Z" fill="none" stroke="#c9c9c9" stroke-width="1.1"/><circle cx="14" cy="13" r="0.9" fill="#a0a0a0"/></svg>
<svg class="abs" style="left:5px;top:148px" width="16" height="16" viewBox="0 0 16 16"><path d="M3 13 L9 7 M8 5 L11 8 M9.5 3.5 Q12 1.5 13.5 3 Q14.5 4.5 12.5 6.5 Z" fill="#c9c9c9" stroke="#c9c9c9" stroke-width="1.5"/><circle cx="14" cy="13" r="0.9" fill="#a0a0a0"/></svg>
<svg class="abs" style="left:5px;top:166px" width="16" height="16" viewBox="0 0 16 16"><rect x="2.5" y="5.5" width="11" height="5" rx="2.5" transform="rotate(-45 8 8)" fill="#d0d0d0"/><circle cx="8" cy="8" r="1" fill="#777"/><circle cx="14" cy="13" r="0.9" fill="#a0a0a0"/></svg>
<svg class="abs" style="left:5px;top:184px" width="16" height="16" viewBox="0 0 16 16"><path d="M12.5 2.5 L6 9" stroke="#d0d0d0" stroke-width="1.8"/><path d="M5.5 8.5 Q3 9 3 13 Q6 13 7 10.5 Z" fill="#e0e0e0"/><circle cx="14" cy="13" r="0.9" fill="#a0a0a0"/></svg>
<svg class="abs" style="left:5px;top:201px" width="16" height="16" viewBox="0 0 16 16"><path d="M6.5 2.5 H9.5 V7 H6.5 Z M3 8 H13 V11 H3 Z M3 12.5 H13" fill="#d8d8d8" stroke="#d8d8d8" stroke-width="1"/><circle cx="14" cy="13" r="0.9" fill="#a0a0a0"/></svg>
<svg class="abs" style="left:5px;top:219px" width="16" height="16" viewBox="0 0 16 16"><path d="M12.5 2.5 L6 9" stroke="#d0d0d0" stroke-width="1.6"/><path d="M5.5 8.5 Q3 9 3 13 Q6 13 7 10.5 Z" fill="#e0e0e0"/><path d="M2 5 Q3 2 6 3" stroke="#bbb" fill="none"/><circle cx="14" cy="13" r="0.9" fill="#a0a0a0"/></svg>
<svg class="abs" style="left:5px;top:236px" width="16" height="16" viewBox="0 0 16 16"><rect x="3" y="5" width="10" height="6" rx="1" transform="rotate(-35 8 8)" fill="#d5d5d5"/><circle cx="14" cy="13" r="0.9" fill="#a0a0a0"/></svg>
<svg class="abs" style="left:5px;top:254px" width="16" height="16" viewBox="0 0 16 16"><rect x="3" y="3.5" width="10" height="9" fill="#9a9a9a" stroke="#d8d8d8" stroke-width="1"/><rect x="4" y="4.5" width="4" height="7" fill="#c8c8c8"/><circle cx="14" cy="13" r="0.9" fill="#a0a0a0"/></svg>
<svg class="abs" style="left:5px;top:270px" width="16" height="16" viewBox="0 0 16 16"><path d="M8 2 Q12.5 8 12 10 Q11.5 13.5 8 13.5 Q4.5 13.5 4 10 Q3.5 8 8 2 Z" fill="#d8d8d8"/><circle cx="14" cy="13" r="0.9" fill="#a0a0a0"/></svg>
<svg class="abs" style="left:5px;top:288px" width="16" height="16" viewBox="0 0 16 16"><circle cx="7" cy="6" r="3.8" fill="#d8d8d8"/><path d="M9.5 9 L13 13" stroke="#d0d0d0" stroke-width="1.6"/><circle cx="14" cy="13" r="0.9" fill="#a0a0a0"/></svg>
<svg class="abs" style="left:5px;top:308px" width="16" height="16" viewBox="0 0 16 16"><path d="M3 13 L5 8 L10 3 L13 6 L8 11 Z" fill="#d8d8d8"/><circle cx="6.5" cy="9.5" r="1" fill="#555"/><circle cx="14" cy="13" r="0.9" fill="#a0a0a0"/></svg>
<svg class="abs" style="left:5px;top:325px" width="16" height="16" viewBox="0 0 16 16"><path d="M3 3 H13 V5 M8 3 V13 M5.5 13 H10.5 M3 3 V5" fill="none" stroke="#dedede" stroke-width="1.6"/><circle cx="14" cy="13" r="0.9" fill="#a0a0a0"/></svg>
<svg class="abs" style="left:5px;top:341px" width="16" height="16" viewBox="0 0 16 16"><path d="M4 2 L4 13 L6.5 10.5 L8.5 14 L10 13.3 L8.2 10 L11.5 10 Z" fill="#e6e6e6"/><circle cx="14" cy="13" r="0.9" fill="#a0a0a0"/></svg>
<svg class="abs" style="left:5px;top:359px" width="16" height="16" viewBox="0 0 16 16"><rect x="3" y="4" width="10" height="9" fill="#b8b8b8" stroke="#dcdcdc" stroke-width="1"/><circle cx="14" cy="13" r="0.9" fill="#a0a0a0"/></svg>
<svg class="abs" style="left:5px;top:376px" width="16" height="16" viewBox="0 0 16 16"><path d="M4 9 V5 Q4 4 5 4 Q6 4 6 5 V3 Q6 2 7 2 Q8 2 8 3 V3 Q8 2 9 2.5 Q10 3 10 4 V5 Q10 4 11 4.2 Q12 4.5 12 6 V10 Q12 14 8 14 Q5 14 3 11 L2 8.5 Q3 8 4 9 Z" fill="#e0e0e0"/><circle cx="14" cy="13" r="0.9" fill="#a0a0a0"/></svg>
<svg class="abs" style="left:5px;top:397px" width="16" height="16" viewBox="0 0 16 16"><circle cx="6.5" cy="6.5" r="3.8" fill="none" stroke="#dadada" stroke-width="1.6"/><path d="M9.5 9.5 L13.5 13.5" stroke="#dadada" stroke-width="2"/><circle cx="14" cy="13" r="0.9" fill="#a0a0a0"/></svg>
<svg class="abs" style="left:3px;top:412px" width="22" height="12" viewBox="0 0 22 12"><rect x="2" y="1" width="4" height="4" fill="#111" stroke="#ddd" stroke-width="0.8"/><rect x="4.5" y="3.5" width="4" height="4" fill="#eee" stroke="#ddd" stroke-width="0.6"/><path d="M14 2 Q18 2 18 6 M16 4 L18 6 L20 4 M12 5 L14 2 L16 5" stroke="#ccc" fill="none" stroke-width="0.9"/></svg>
<div class="abs" style="left:11px;top:432px;width:11px;height:12px;background:#f4f4f4;border:1px solid #ddd"></div>
<div class="abs" style="left:4px;top:425px;width:12px;height:13px;background:#6c6c6c;border:1px solid #c8c8c8;box-shadow:0 0 0 1px #3a3a3a"></div>
<svg class="abs" style="left:6px;top:449px" width="14" height="12" viewBox="0 0 14 12"><rect x="1" y="1" width="12" height="10" fill="#2c2c2c" stroke="#d8d8d8" stroke-width="1.2"/><circle cx="7" cy="6" r="2.5" fill="none" stroke="#d0d0d0" stroke-width="1.2"/></svg>

<div class="menu" style="left:134px;top:16px;width:160px;height:460px"></div>
<div class="it" style="left:149px;top:18.9px">新建(N)</div>
<div class="arr" style="left:284px;top:20.1px"></div>
<div class="it" style="left:149px;top:33.0px">复制 CSS</div>
<div class="it" style="left:149px;top:47.1px">复制图层(D)...</div>
<div class="it" style="left:149px;top:61.1px">删除</div>
<div class="arr" style="left:284px;top:62.3px"></div>
<div class="sep" style="left:137px;width:154px;top:75.8px"></div>
<div class="it" style="left:149px;top:80.9px">重命名图层...</div>
<div class="hl" style="left:135px;width:158px;top:92.0px;height:16px"></div>
<div class="it hlt" style="left:149px;top:95.0px">图层样式(Y)</div>
<div class="arr hla" style="left:284px;top:96.2px"></div>
<div class="it dis" style="left:149px;top:109.0px">智能滤镜</div>
<div class="arr dis" style="left:284px;top:113.0px"></div>
<div class="sep" style="left:137px;width:154px;top:123.7px"></div>
<div class="it" style="left:149px;top:128.8px">新建填充图层(W)</div>
<div class="arr" style="left:284px;top:130.0px"></div>
<div class="it" style="left:149px;top:142.8px">新建调整图层(J)</div>
<div class="arr" style="left:284px;top:144.0px"></div>
<div class="it dis" style="left:149px;top:156.9px">图层内容选项(O)...</div>
<div class="sep" style="left:137px;width:154px;top:171.6px"></div>
<div class="it" style="left:149px;top:176.7px">图层蒙版(M)</div>
<div class="arr" style="left:284px;top:177.9px"></div>
<div class="it" style="left:149px;top:190.8px">矢量蒙版(V)</div>
<div class="arr" style="left:284px;top:191.9px"></div>
<div class="it" style="left:149px;top:204.8px">创建剪贴蒙版(C)</div>
<div class="it" style="right:318px;top:204.8px;font-size:8.9px">Alt+Ctrl+G</div>
<div class="sep" style="left:137px;width:154px;top:219.5px"></div>
<div class="it" style="left:149px;top:224.6px">智能对象</div>
<div class="arr" style="left:284px;top:225.8px"></div>
<div class="it" style="left:149px;top:238.7px">视频图层</div>
<div class="arr" style="left:284px;top:239.8px"></div>
<div class="it" style="left:149px;top:252.7px">栅格化(Z)</div>
<div class="arr" style="left:284px;top:253.9px"></div>
<div class="sep" style="left:137px;width:154px;top:267.4px"></div>
<div class="it" style="left:149px;top:272.5px">新建基于图层的切片(B)</div>
<div class="sep" style="left:137px;width:154px;top:287.2px"></div>
<div class="it" style="left:149px;top:292.3px">图层编组(G)</div>
<div class="it" style="right:318px;top:292.3px;font-size:8.9px">Ctrl+G</div>
<div class="it dis" style="left:149px;top:306.3px">取消图层编组(U)</div>
<div class="it dis" style="right:318px;top:306.3px;font-size:8.9px">Shift+Ctrl+G</div>
<div class="it" style="left:149px;top:320.4px">隐藏图层(R)</div>
<div class="it" style="right:318px;top:320.4px;font-size:8.9px">Ctrl+,</div>
<div class="sep" style="left:137px;width:154px;top:335.1px"></div>
<div class="it" style="left:149px;top:340.2px">排列(A)</div>
<div class="arr" style="left:284px;top:341.4px"></div>
<div class="it dis" style="left:149px;top:354.2px">合并形状(H)</div>
<div class="arr dis" style="left:284px;top:358.2px"></div>
<div class="sep" style="left:137px;width:154px;top:368.9px"></div>
<div class="it dis" style="left:149px;top:374.0px">将图层与选区对齐(I)</div>
<div class="arr dis" style="left:284px;top:378.0px"></div>
<div class="it dis" style="left:149px;top:388.1px">分布(T)</div>
<div class="arr dis" style="left:284px;top:392.1px"></div>
<div class="sep" style="left:137px;width:154px;top:402.8px"></div>
<div class="it" style="left:149px;top:407.9px">锁定图层(L)...</div>
<div class="it" style="right:318px;top:407.9px;font-size:8.9px">Ctrl+/</div>
<div class="sep" style="left:137px;width:154px;top:422.6px"></div>
<div class="it dis" style="left:149px;top:427.6px">链接图层(K)</div>
<div class="it dis" style="left:149px;top:441.7px">选择链接图层(S)</div>
<div class="sep" style="left:137px;width:154px;top:456.4px"></div>
<div class="it" style="left:149px;top:461.5px">合并图层(E)</div>
<div class="it" style="right:318px;top:461.5px;font-size:8.9px">Ctrl+E</div>
<div class="menu" style="left:35px;top:91px;width:101px;height:274px"></div>
<div class="it" style="left:50px;top:94.9px">混合选项(N)...</div>
<div class="sep" style="left:38px;width:95px;top:109.6px"></div>
<div class="it" style="left:50px;top:115.1px">斜面和浮雕(B)...</div>
<div class="it" style="left:50px;top:129.0px">描边(K)...</div>
<div class="it" style="left:50px;top:142.9px">内阴影(I)...</div>
<div class="it" style="left:50px;top:156.8px">内发光(W)...</div>
<div class="it" style="left:50px;top:170.8px">光泽(T)...</div>
<div class="it" style="left:50px;top:184.7px">颜色叠加(V)...</div>
<div class="it" style="left:50px;top:198.6px">渐变叠加(G)...</div>
<div class="it" style="left:50px;top:212.5px">图案叠加(Y)...</div>
<div class="it" style="left:50px;top:226.4px">外发光(O)...</div>
<div class="chk" style="left:39px;top:226.4px">✔</div>
<div class="it" style="left:50px;top:240.4px">投影(D)...</div>
<div class="sep" style="left:38px;width:95px;top:255.1px"></div>
<div class="it" style="left:50px;top:260.6px">拷贝图层样式(C)</div>
<div class="it dis" style="left:50px;top:274.5px">粘贴图层样式(P)</div>
<div class="it" style="left:50px;top:288.4px">清除图层样式(A)</div>
<div class="sep" style="left:38px;width:95px;top:303.1px"></div>
<div class="it" style="left:50px;top:308.6px">全局光(L)...</div>
<div class="it" style="left:50px;top:322.5px">创建图层(R)</div>
<div class="it" style="left:50px;top:336.5px">隐藏所有效果(H)</div>
<div class="hl" style="left:36px;width:99px;top:348.9px;height:16px"></div>
<div class="it hlt" style="left:50px;top:350.4px">缩放效果(F)...</div>
</div></body></html>
